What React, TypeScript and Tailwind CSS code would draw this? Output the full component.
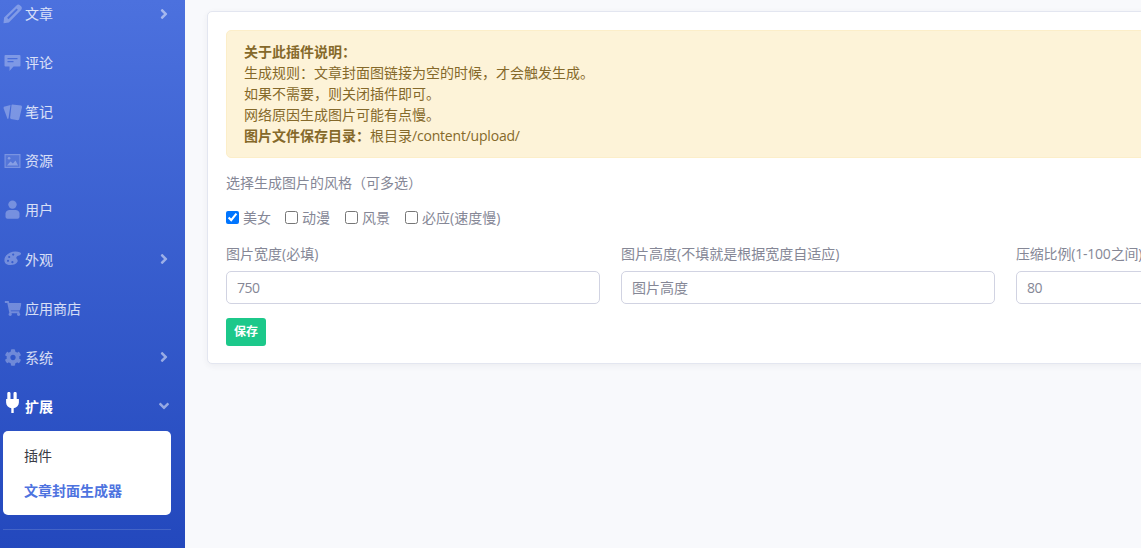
import { FaShoppingCart, FaCog, FaAngleRight, FaAngleDown } from 'react-icons/fa';
import type { ReactNode } from 'react';

const FONT = "font-['Open_Sans','Noto_Sans_CJK_SC',sans-serif]";

// hand drawn, the package icons are a different set
function Icon({ children, h = 20 }: { children: ReactNode; h?: number }) {
  return (
    <svg viewBox={`0 0 20 ${h}`} width={20} height={h} fill="currentColor" fillRule="evenodd" className="-translate-x-[1.5px]">
      {children}
    </svg>
  );
}

const PencilIcon = () => (
  <Icon>
    <path d="M1 19.2 1.6 13.6 14 1.4C15 .4 16.4.4 17.4 1.2L18.8 2.6C19.6 3.6 19.6 5 18.6 6L6.4 18.4ZM4.6 13.8 14 4.4 15.4 5.8 6 15.2Z" />
  </Icon>
);

const CommentIcon = () => (
  <Icon>
    <path d="M3 2h14a1 1 0 0 1 1 1v9.4a1 1 0 0 1-1 1h-6l-4 4.6v-4.6H3a1 1 0 0 1-1-1V3a1 1 0 0 1 1-1ZM5 5v1.2h10V5ZM5 8v1.2h6V8Z" />
  </Icon>
);

const NoteIcon = () => (
  <Icon>
    <path d="M1.4 4.8 8 3 6 16.6 5 17 1 6Z" />
    <path d="M9.6 2.4 18.8 3.6 19.6 4.8 16.6 17.6 15.4 18.2 8.4 17 7.6 16 9 3Z" />
  </Icon>
);

const ImageIcon = () => (
  <Icon>
    <path d="M2 3h16v14H2ZM3.2 4.2v11.6h13.6V4.2Z" />
    <rect x="3.2" y="4.2" width="13.6" height="11.6" opacity="0.35" />
    <path d="M4.5 14.5 8 10.4l2.4 2.2L13 9.6l2.6 4.9Z" />
    <circle cx="6.6" cy="7.2" r="1.3" />
  </Icon>
);

const UserIcon = () => (
  <Icon>
    <circle cx="10" cy="4.6" r="4.2" />
    <path d="M3 13.6C3 11.4 5 10 7 10h6c2 0 4 1.4 4 3.6v3.2c0 1-1 2-2 2H5c-1 0-2-1-2-2Z" />
  </Icon>
);

const PaletteIcon = () => (
  <Icon>
    <path d="M2 12.4C1 6.6 7 2.4 13 2.4 17 2.4 19 3.6 18.5 5 18 6.6 15 6.2 14 8 13 10 16 10.2 15 12.8 13.6 16.8 3 17.6 2 12.4ZM4.4 11.8a1.1 1.1 0 1 0 2.2 0 1.1 1.1 0 1 0-2.2 0ZM5.6 8a1.1 1.1 0 1 0 2.2 0 1.1 1.1 0 1 0-2.2 0ZM9.6 5.6a1.1 1.1 0 1 0 2.2 0 1.1 1.1 0 1 0-2.2 0ZM8.8 13.2a1.1 1.1 0 1 0 2.2 0 1.1 1.1 0 1 0-2.2 0Z" />
  </Icon>
);

const PlugIcon = () => (
  <Icon h={28}>
    <path d="M4.8 1.4C4.8.5 5.5 0 6.4 0S8 .5 8 1.4V7H4.8ZM11 1.4C11 .5 11.7 0 12.6 0S14.2.5 14.2 1.4V7H11ZM3.6 7h12.8v3.6C16.4 13.6 14.2 15.6 11.2 16.2V21H8.8v-4.8C5.8 15.6 3.6 13.6 3.6 10.6Z" />
  </Icon>
);

type NavItem = { label: string; icon: ReactNode; arrow?: boolean };

const navItems: NavItem[] = [
  { label: '文章', icon: <PencilIcon />, arrow: true },
  { label: '评论', icon: <CommentIcon /> },
  { label: '笔记', icon: <NoteIcon /> },
  { label: '资源', icon: <ImageIcon /> },
  { label: '用户', icon: <UserIcon /> },
  { label: '外观', icon: <PaletteIcon />, arrow: true },
  { label: '应用商店', icon: <FaShoppingCart className="h-[15px] w-[17px] -translate-x-[0.5px]" /> },
  { label: '系统', icon: <FaCog className="h-[17px] w-[17px] -translate-x-[0.5px]" />, arrow: true },
];

const styles = [
  { label: '美女', checked: true, width: 'w-[59px]' },
  { label: '动漫', checked: false, width: 'w-[60px]' },
  { label: '风景', checked: false, width: 'w-[60px]' },
  { label: '必应(速度慢)', checked: false, width: 'w-auto' },
];

export default function App() {
  return (
    <div className={`flex h-[548px] w-[1141px] overflow-hidden bg-[#f8f9fc] ${FONT}`}>
      <aside className="flex h-full w-[185px] shrink-0 flex-col bg-gradient-to-b from-[#4c71de] to-[#2348bd] pl-[3px] pr-[14px]">
        <nav className="-mt-[11px]">
          {navItems.map(item => (
            <div key={item.label} className="flex h-[49.1px] items-center text-[14px] leading-[21px] text-white/80">
              <span className="flex w-[21px] shrink-0 items-center justify-center text-white/30">{item.icon}</span>
              <span className="ml-[1px]">{item.label}</span>
              {item.arrow && <FaAngleRight className="ml-auto mr-[3px] h-[16px] w-[8px] text-white/50" />}
            </div>
          ))}
          <div className="flex h-[49px] items-center text-[14px] font-bold leading-[21px] text-white">
            <span className="flex w-[21px] shrink-0 items-center justify-center"><PlugIcon /></span>
            <span className="ml-[1px]">扩展</span>
            <FaAngleDown className="ml-auto mr-[2px] h-[16px] w-[10px] text-white/50" />
          </div>
        </nav>
        <div className="rounded-[5px] bg-white py-[7px] text-[14px] leading-[21px]">
          <div className="px-[21px] py-[7px] text-[#3a3b45]">插件</div>
          <div className="px-[21px] py-[7px] font-bold text-[#4e73df]">文章封面生成器</div>
        </div>
        <hr className="mt-[14px] border-t border-white/15" />
      </aside>

      <main className="min-w-0 flex-1 overflow-hidden pl-[22px] pt-[11px]">
        <div className="h-[353px] w-[1202px] rounded-[5px] border border-[#e3e6f0] bg-white px-[18px] pt-[18px] shadow-[0_2px_6px_rgba(58,59,69,0.06)]">
          <div className="rounded-[5px] border border-[#fceec9] bg-[#fdf3d8] px-[17px] pb-[11px] pt-[10px] text-[14px] leading-[21px] text-[#85692a]">
            <div className="font-bold">关于此插件说明：</div>
            <div>生成规则：文章封面图链接为空的时候，才会触发生成。</div>
            <div>如果不需要，则关闭插件即可。</div>
            <div>网络原因生成图片可能有点慢。</div>
            <div><span className="font-bold">图片文件保存目录：</span>根目录<span className="tracking-[-0.2px]">/content/upload/</span></div>
          </div>

          <div className="mt-[14px] text-[14px] leading-[21px] text-[#858796]">选择生成图片的风格（可多选）</div>

          <div className="mt-[14px] flex h-[21px] items-center text-[14px] leading-[21px] text-[#858796]">
            {styles.map(s => (
              <label key={s.label} className={`flex items-center ${s.width}`}>
                <input type="checkbox" defaultChecked={s.checked} className="-mt-[1px] h-[13px] w-[13px]" />
                <span className="ml-[4px]">{s.label}</span>
              </label>
            ))}
          </div>

          <div className="mt-[15px] grid grid-cols-[374px_374px_374px] gap-x-[21px] text-[14px] leading-[21px] text-[#858796]">
            <div>
              <div>图片宽度(必填)</div>
              <input defaultValue="750" className="mt-[7px] h-[33px] w-full rounded-[5px] border border-[#d1d3e2] px-[10px] text-[14px] tracking-[-0.5px] outline-none" />
            </div>
            <div>
              <div>图片高度(不填就是根据宽度自适应)</div>
              <input placeholder="图片高度" className="mt-[7px] h-[33px] w-full rounded-[5px] border border-[#d1d3e2] px-[10px] text-[14px] outline-none placeholder:text-[#858796]" />
            </div>
            <div>
              <div className="tracking-[-0.2px]">压缩比例(1-100之间)</div>
              <input defaultValue="80" className="mt-[7px] h-[33px] w-full rounded-[5px] border border-[#d1d3e2] px-[10px] text-[14px] tracking-[-0.5px] outline-none" />
            </div>
          </div>

          <button className="mt-[14px] flex h-[28px] w-[40px] items-center justify-center rounded-[3px] bg-[#1cc88a] text-[12px] font-bold text-white">保存</button>
        </div>
      </main>
    </div>
  );
}
